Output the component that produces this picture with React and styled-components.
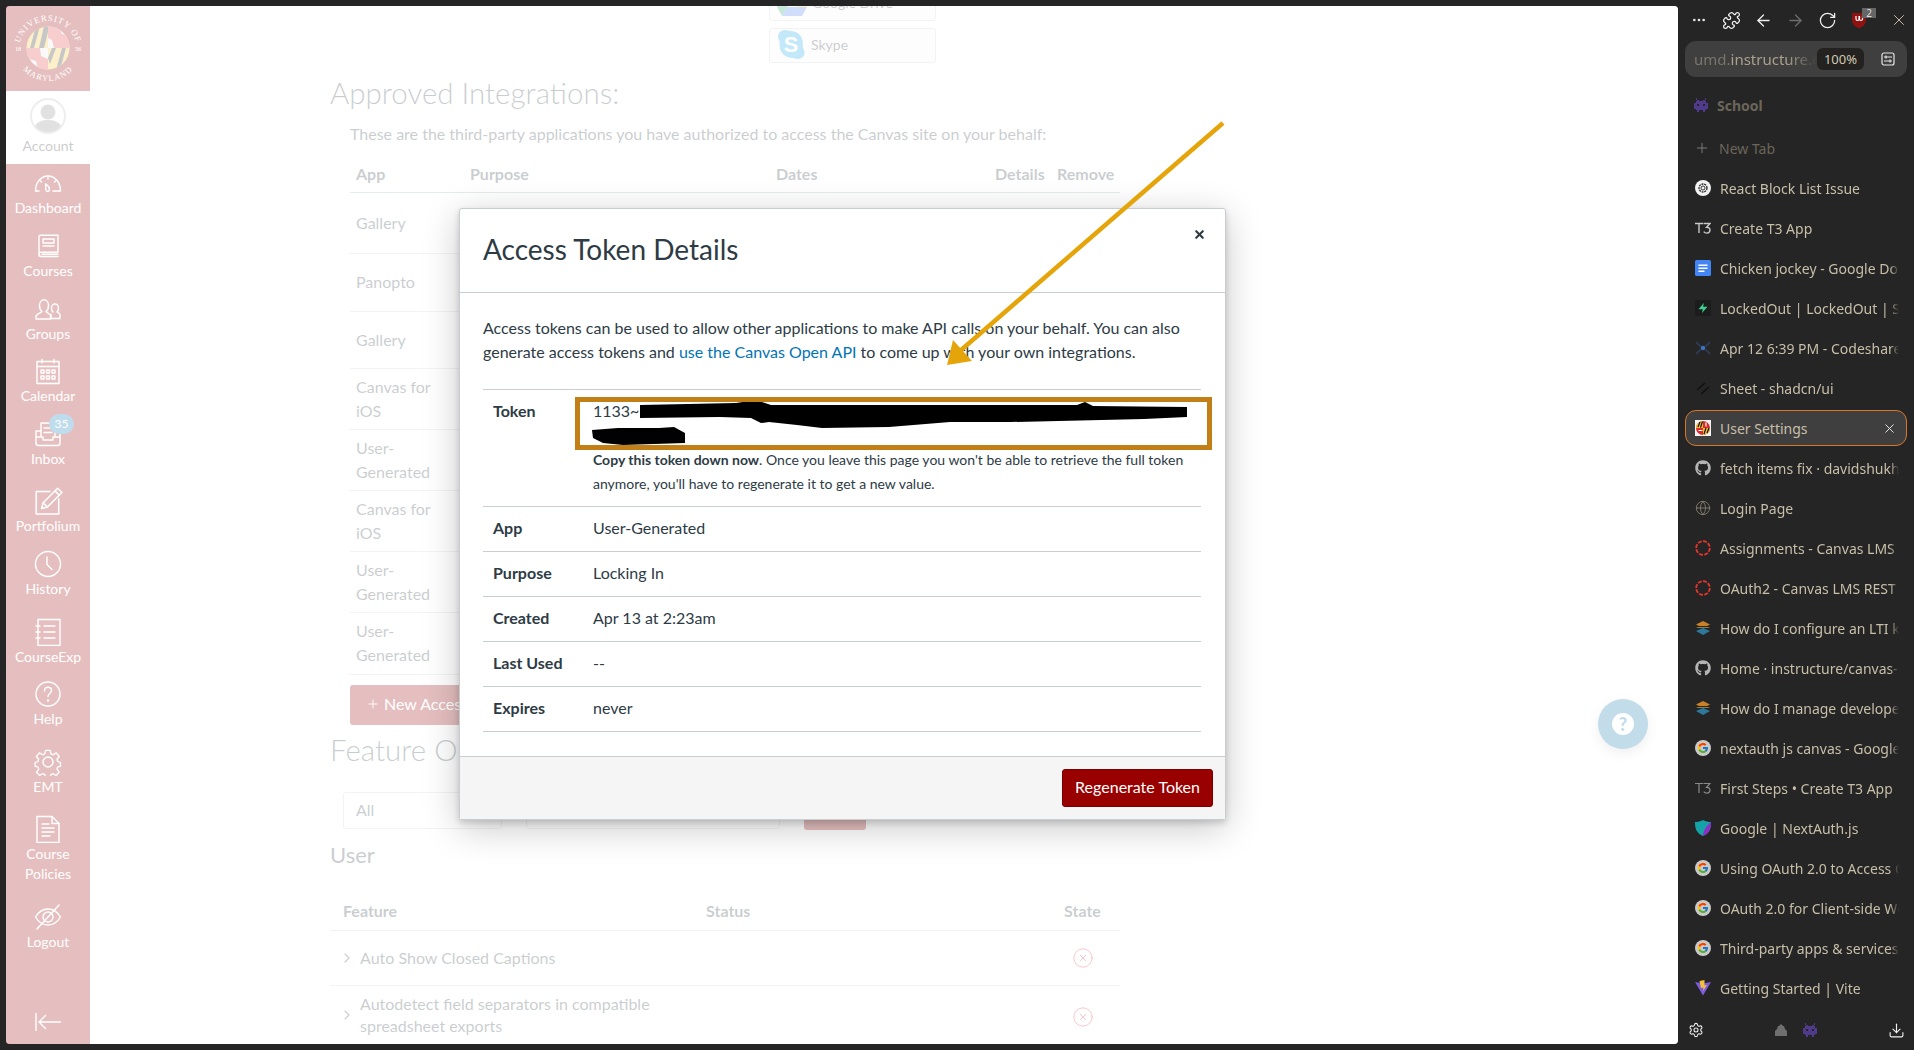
import React from "react";
import styled, { createGlobalStyle } from "styled-components";
import {
  ArrowLeft,
  ArrowRight,
  RotateCw,
  X,
  Plus,
  Globe,
  CircleX,
  ChevronRight,
  Download,
  Ellipsis,
  Puzzle,
  Settings,
} from "lucide-react";
import { FaGithub } from "react-icons/fa";
import { FcGoogle } from "react-icons/fc";

const GlobalStyle = createGlobalStyle`
  html, body { margin: 0; padding: 0; background: #252525; }
  * { box-sizing: border-box; }
  body { font-family: "Lato", "Liberation Sans", sans-serif; color: #2d3b45; overflow: hidden; }
`;

/* ---------- canvas nav icons ---------- */
const NavSvg = ({ children, size = 28 }) => (
  <svg width={size} height={size} viewBox="0 0 28 28" fill="none" stroke="#fff" strokeWidth="1.4" strokeLinecap="round" strokeLinejoin="round">
    {children}
  </svg>
);

const navIcons = {
  dashboard: (
    <NavSvg>
      <path d="M5 22h-3.500c0-8 5-15 12.500-15s12.500 7 12.500 15H19" />
      <path d="M12 15l2.500 2.500 0 0c1 1.500 1.500 3 .5 4.300-1 1-2.500.8-3-.5-.3-1.500-.3-4-.5-6.300z" />
      <path d="M14 8.500v1.500M6.500 12l1 1M21.500 12l-1 1" />
    </NavSvg>
  ),
  courses: (
    <NavSvg>
      <path d="M5 24V4.500c0-.8.5-1.300 1.300-1.300H24v17H7.500C6 20.200 5 21 5 22.300 5 23.500 6 24.500 7.500 24.500H24" />
      <rect x="9" y="7" width="11" height="4" />
      <path d="M9 14h11M8 22.300h16" />
    </NavSvg>
  ),
  groups: (
    <NavSvg>
      <path d="M2 24v-2.500c0-2.500 5-3.500 6-5-2-1.500-2.500-4-2.500-6C5.500 7 7.500 4.800 10 4.800s4.500 2.200 4.500 5.700c0 2-.5 4.500-2.500 6 1 1.500 3 2 4.500 3.500V24z" />
      <path d="M19 17c-1-1-1.500-2.500-1.500-4 0-2.200 1.500-4 3.500-4s3.500 1.800 3.500 4c0 1.500-.5 3-1.500 4 1 .7 3 1.200 3 3v3.500H17v-4" />
    </NavSvg>
  ),
  calendar: (
    <NavSvg>
      <rect x="3" y="4.500" width="22" height="22" />
      <path d="M3 9.500h22M8 2.500v3.500M20 2.500v3.500" />
      <path d="M7 13h3v3H7zM12.500 13h3v3h-3zM18 13h3v3h-3zM7 19h3v3H7zM12.500 19h3v3h-3zM18 19h3v3h-3z" />
    </NavSvg>
  ),
  inbox: (
    <NavSvg>
      <path d="M7 16V3h14v13" />
      <path d="M10 8h8M10 12.500h8" />
      <path d="M7 11H2v12c0 1.500 1 2.500 2.500 2.500h19c1.500 0 2.500-1 2.500-2.500V11h-5" />
      <path d="M2 17h7v3h10v-3h7" />
    </NavSvg>
  ),
  portfolium: (
    <NavSvg size={30}>
      <path d="M16 6H3v21h21V13" />
      <path d="M8 22l1.500-5.500L23 3l4 4-13.500 13.500z" />
      <path d="M20.500 5.500l4 4M9.500 16.500l4 4" />
    </NavSvg>
  ),
  history: (
    <NavSvg>
      <circle cx="14" cy="14" r="12.500" />
      <path d="M13 7v7.500l5 5" />
    </NavSvg>
  ),
  courseexp: (
    <NavSvg>
      <rect x="4" y="1.500" width="22" height="26" />
      <path d="M10 8h11M10 14h11M10 20h11" />
      <path d="M2 8h4M2 14h4M2 20h4" />
    </NavSvg>
  ),
  help: (
    <NavSvg>
      <circle cx="14" cy="14" r="12" />
      <path d="M10.500 11c0-2.500 1.700-3.800 3.500-3.800s3.500 1.300 3.500 3.300c0 3-3.500 3-3.500 6" />
      <circle cx="14" cy="20.500" r=".5" />
    </NavSvg>
  ),
  emt: (
    <NavSvg>
      <path d="M11.500 1.500h5l.7 3.800 2.400 1 3.300-2 3.300 3.800-2.500 3 .7 2.400 3.100 1.100-.0 4-3.200 1-.6 2.400 2.400 3-3.400 3.600-3.200-2.100-2.300 1-.8 3.400h-5l-.7-3.400-2.400-1-3.200 2.100-3.500-3.600 2.500-3-.7-2.400-3.200-1v-4l3.100-1.100.7-2.400-2.500-3 3.400-3.800 3.300 2 2.300-1z" transform="scale(.93) translate(1 1)" />
      <circle cx="14" cy="14" r="5" />
    </NavSvg>
  ),
  policies: (
    <NavSvg>
      <path d="M3 1.500h15l7 7v19H3z" />
      <path d="M18 1.500v7h7" />
      <path d="M8 9h7M8 13h12M8 17h12M8 21h8" />
    </NavSvg>
  ),
  logout: (
    <NavSvg>
      <path d="M1.500 14c3-5 7.500-8 12.500-8s9.500 3 12.500 8c-3 5-7.500 8-12.500 8s-9.500-3-12.500-8z" />
      <circle cx="14" cy="14" r="5" />
      <path d="M3 26L25 2" />
    </NavSvg>
  ),
};

const navItems = [
  { id: "dashboard", label: "Dashboard", h: 58 },
  { id: "courses", label: "Courses", h: 63 },
  { id: "groups", label: "Groups", h: 63 },
  { id: "calendar", label: "Calendar", h: 62 },
  { id: "inbox", label: "Inbox", h: 63, badge: "35" },
  { id: "portfolium", label: "Portfolium", h: 67 },
  { id: "history", label: "History", h: 63 },
  { id: "courseexp", label: "CourseExp", h: 68 },
  { id: "help", label: "Help", h: 62 },
  { id: "emt", label: "EMT", h: 68 },
  { id: "policies", label: "Course Policies", h: 87 },
  { id: "logout", label: "Logout", h: 68 },
];

/* ---------- UMD seal ---------- */
const Seal = () => (
  <svg width="84" height="84" viewBox="0 0 84 84">
    <defs>
      <path id="arcTop" d="M13 44a29 29 0 0 1 58 0" />
      <path id="arcBottom" d="M9 42a33 33 0 0 0 66 0" />
      <clipPath id="globe"><circle cx="42" cy="42" r="21.500" /></clipPath>
    </defs>
    <g clipPath="url(#globe)">
      <rect x="20" y="20" width="22" height="22" fill="#f2c230" />
      <rect x="42" y="42" width="22" height="22" fill="#f2c230" />
      <path d="M24 42l6-22h4l-6 22zM33 42l5-22h4v6l-4 16z" fill="#222" />
      <path d="M42 52l4-10h4l-6 16zM50 64l6-22h4l-6 22z" fill="#222" />
      <rect x="42" y="20" width="22" height="22" fill="#e6e6e6" />
      <rect x="20" y="42" width="22" height="22" fill="#e6e6e6" />
      <path d="M42 20h10l4 8 8 2v12H48l-2-8-4-2z" fill="#e03a3a" />
      <path d="M20 42h14l1 8 7 3v11H32l-2-9-10-3z" fill="#e03a3a" />
    </g>
    <g fill="#fff" fontFamily="'Liberation Serif', serif" fontSize="8.500" letterSpacing="1">
      <text><textPath href="#arcTop" startOffset="50%" textAnchor="middle">UNIVERSITY OF</textPath></text>
      <text><textPath href="#arcBottom" startOffset="50%" textAnchor="middle">MARYLAND</textPath></text>
      <text x="9" y="45" fontSize="6" letterSpacing="0">18</text>
      <text x="69" y="45" fontSize="6" letterSpacing="0">56</text>
    </g>
  </svg>
);

/* ---------- tab favicons ---------- */
const Fav = ({ children }) => <svg width="16" height="16" viewBox="0 0 16 16">{children}</svg>;

const favicons = {
  openai: (
    <Fav>
      <circle cx="8" cy="8" r="8" fill="#f2f2f2" />
      <circle cx="8" cy="8" r="4" fill="none" stroke="#222" strokeWidth="1.300" strokeDasharray="2 .8" />
      <circle cx="8" cy="8" r="2" fill="none" stroke="#222" strokeWidth=".9" />
    </Fav>
  ),
  t3: (
    <Fav>
      <path d="M0 3.500h8M4 3.500V13M8.500 3.500h6.500l-3.500 3.800c2.500 0 3.500 1.200 3.500 2.800 0 2-1.500 3-3.300 3-1.300 0-2.300-.5-3-1.500" fill="none" stroke="#c8c8c8" strokeWidth="1.400" />
    </Fav>
  ),
  t3dim: (
    <Fav>
      <path d="M0 3.500h8M4 3.500V13M8.500 3.500h6.500l-3.500 3.800c2.500 0 3.500 1.200 3.500 2.800 0 2-1.500 3-3.300 3-1.300 0-2.300-.5-3-1.500" fill="none" stroke="#8a8a8a" strokeWidth="1.200" />
    </Fav>
  ),
  docs: (
    <Fav>
      <rect width="16" height="16" rx="1.500" fill="#4285f4" />
      <path d="M3.500 4.500h9v1.500h-9zM3.500 7.500h9V9h-9zM3.500 10.500h6V12h-6z" fill="#fff" />
    </Fav>
  ),
  supabase: (
    <Fav>
      <rect width="16" height="16" rx="1.500" fill="#1c1c1c" />
      <path d="M8.800 3L3.500 9.200h4.300L7 13l5.500-6.200H8.200z" fill="#3ecf8e" />
    </Fav>
  ),
  codeshare: (
    <Fav>
      <path d="M1 2l4.500 4.500M15 2l-4.500 4.500M1 14l4.500-4.500M15 14l-4.500-4.500" stroke="#2d3b50" strokeWidth="2" />
      <circle cx="8" cy="8" r="2.300" fill="#3f70c4" />
    </Fav>
  ),
  shadcn: (
    <Fav>
      <path d="M2 10L10 3M6 14L14 7" stroke="#111" strokeWidth="1.600" />
    </Fav>
  ),
  umd: (
    <Fav>
      <rect width="16" height="16" fill="#f4f4f4" />
      <circle cx="8" cy="8" r="7" fill="#d92b2b" />
      <path d="M1 8a7 7 0 0 1 7-7v7zM8 8h7a7 7 0 0 1-7 7z" fill="#f2c230" />
      <path d="M3 7l2-5M5.500 7.500l2-6M9 14l2-6M12 13l2-5" stroke="#111" strokeWidth="1.200" />
      <path d="M11 2.500v4M3.500 10.500h4" stroke="#fff" strokeWidth="1.200" />
    </Fav>
  ),
  canvas: (
    <Fav>
      <circle cx="8" cy="8" r="6.800" fill="none" stroke="#e6352b" strokeWidth="1.800" strokeDasharray="4 1.300" />
    </Fav>
  ),
  instructure: (
    <Fav>
      <path d="M8 1l7 3.500-3 1.500H4L1 4.500z" fill="#c9822a" />
      <path d="M3 7h10l2 .8H1z" fill="#c9a02a" />
      <path d="M8 15l7-4-7-3-7 3z" fill="#2b7a9c" />
    </Fav>
  ),
  nextauth: (
    <Fav>
      <path d="M0 2c3 0 5-.6 8-2 3 1.400 5 2 8 2 0 6-1 11-8 14C1 13 0 8 0 2z" fill="#16a3a8" />
      <path d="M16 2c0 6-1 11-8 14 0-5 3-10 8-14z" fill="#8b2fc9" />
    </Fav>
  ),
  vite: (
    <Fav>
      <path d="M0 2l8 13.500L16 2l-8 1.500z" fill="#7c5ce0" />
      <path d="M9.500 0L4.500 1 6 8l2.500-.5-.5 3.500 4-6-2.500.5z" fill="#f5c13a" />
    </Fav>
  ),
};

const GoogleFav = styled.span`
  width: 16px;
  height: 16px;
  border-radius: 50%;
  background: #c9c9c9;
  display: flex;
  align-items: center;
  justify-content: center;
`;

const renderFavicon = (kind) => {
  if (kind === "github") return <FaGithub size={16} color="#b4b4b4" />;
  if (kind === "globe") return <Globe size={16} color="#8a8372" strokeWidth={1.3} />;
  if (kind === "google")
    return (
      <GoogleFav>
        <FcGoogle size={12} />
      </GoogleFav>
    );
  return favicons[kind];
};

const tabs = [
  { icon: "openai", title: "React Block List Issue" },
  { icon: "t3", title: "Create T3 App" },
  { icon: "docs", title: "Chicken jockey - Google Docs" },
  { icon: "supabase", title: "LockedOut | LockedOut | Supabase" },
  { icon: "codeshare", title: "Apr 12 6:39 PM - Codeshare" },
  { icon: "shadcn", title: "Sheet - shadcn/ui" },
  { icon: "umd", title: "User Settings", active: true },
  { icon: "github", title: "fetch items fix · davidshukhin/lockedout" },
  { icon: "globe", title: "Login Page" },
  { icon: "canvas", title: "Assignments - Canvas LMS REST API" },
  { icon: "canvas", title: "OAuth2 - Canvas LMS REST API" },
  { icon: "instructure", title: "How do I configure an LTI key for an account" },
  { icon: "github", title: "Home · instructure/canvas-lms Wiki" },
  { icon: "instructure", title: "How do I manage developer keys" },
  { icon: "google", title: "nextauth js canvas - Google Search" },
  { icon: "t3dim", title: "First Steps • Create T3 App" },
  { icon: "nextauth", title: "Google | NextAuth.js" },
  { icon: "google", title: "Using OAuth 2.0 to Access Google APIs" },
  { icon: "google", title: "OAuth 2.0 for Client-side Web Apps" },
  { icon: "google", title: "Third-party apps & services" },
  { icon: "vite", title: "Getting Started | Vite" },
];

const Invader = ({ color, size = 16 }) => (
  <svg width={size} height={size} viewBox="0 0 11 11" fill={color} shapeRendering="crispEdges">
    <path d="M2 1h1v1h1v1h3V2h1V1h1v1H8v1h1v1h1v4H9v1H8v1H7V9H4v1H3V9H2V8H1V4h1V3h1V2H2zM3 5v1h1V5zm4 0v1h1V5z" fillRule="evenodd" />
  </svg>
);

export default function App() {
  return (
    <Stage>
      <GlobalStyle />
      <Main>
        <Nav>
          <LogoBox>
            <Seal />
          </LogoBox>
          <AccountItem>
            <Avatar>
              <svg width="36" height="36" viewBox="0 0 36 36">
                <circle cx="18" cy="18" r="17" fill="#fff" stroke="#bbb" strokeWidth="2" />
                <circle cx="18" cy="14" r="7.500" fill="#888" />
                <path d="M5 28c3-5 8-6 13-6s10 1 13 6c-3 4-8 6-13 6s-10-2-13-6z" fill="#888" />
              </svg>
            </Avatar>
            <AccountLabel>Account</AccountLabel>
          </AccountItem>
          {navItems.map((item) => (
            <NavItem key={item.id} $h={item.h}>
              <NavIconBox>
                {navIcons[item.id]}
                {item.badge && <NavBadge>{item.badge}</NavBadge>}
              </NavIconBox>
              <NavLabel>{item.label}</NavLabel>
            </NavItem>
          ))}
          <Collapse>
            <svg width="28" height="20" viewBox="0 0 28 20" fill="none" stroke="#fff" strokeWidth="1.400">
              <path d="M2 1v18M27 10H5M12 3l-7 7 7 7" />
            </svg>
          </Collapse>
        </Nav>

        <Page>
          <ServiceCards>
            <ServiceCard>
              <svg width="30" height="28" viewBox="0 0 30 28">
                <path d="M10 1h10l10 17h-10z" fill="#f7c52b" />
                <path d="M10 1L0 18l5 9 10-17z" fill="#1da261" />
                <path d="M5 27h20l5-9H10z" fill="#4a7ef0" />
              </svg>
              <ServiceName>Google Drive</ServiceName>
            </ServiceCard>
            <ServiceCard>
              <svg width="29" height="29" viewBox="2 1 26 28">
                <path d="M9 1c2 0 3 1 5 1 7 0 12 5 12 12 0 2-.5 3 .5 5 .5 1.500 1 2.500 1 4 0 4-3 6-6 6-2 0-3-1-5-1-7 0-13-5-13-12 0-2 .5-3-.5-5C2.500 9.500 2 8.500 2 7c0-3.500 3.500-6 7-6z" fill="#12a5e8" />
                <text x="14.500" y="22" fill="#fff" fontFamily="'Liberation Sans', sans-serif" fontWeight="700" fontSize="21" textAnchor="middle">S</text>
              </svg>
              <ServiceName>Skype</ServiceName>
            </ServiceCard>
          </ServiceCards>

          <SectionTitle>Approved Integrations:</SectionTitle>
          <SectionIntro>These are the third-party applications you have authorized to access the Canvas site on your behalf:</SectionIntro>

          <IntegrationTable>
            <IntegrationRow $h={36} $head>
              <span>App</span>
              <span>Purpose</span>
              <span>Dates</span>
              <span>Details</span>
              <span>Remove</span>
            </IntegrationRow>
            {[
              ["Gallery", 61, "Gallery", "Created"],
              ["Panopto", 58],
              ["Gallery", 57],
              ["Canvas for iOS", 61],
              ["User-Generated", 61],
              ["Canvas for iOS", 61],
              ["User-Generated", 61],
              ["User-Generated", 62],
            ].map(([app, h, purpose, dates], i) => (
              <IntegrationRow key={i} $h={h}>
                <span>{app}</span>
                <span>{purpose}</span>
                <span>{dates}</span>
              </IntegrationRow>
            ))}
          </IntegrationTable>

          <NewTokenButton>
            <Plus size={14} strokeWidth={1.5} />
            New Access Token
          </NewTokenButton>

          <SectionTitle $mt={7}>Feature Options</SectionTitle>

          <FilterRow>
            <FilterSelect>All</FilterSelect>
            <FilterInput />
            <FilterButton />
          </FilterRow>

          <SubTitle>User</SubTitle>

          <FeatureTable>
            <FeatureRow $h={36} $head>
              <span>Feature</span>
              <span>Status</span>
              <span>State</span>
            </FeatureRow>
            <FeatureRow $h={55}>
              <FeatureName>
                <ChevronRight size={16} strokeWidth={1.6} />
                <span>Auto Show Closed Captions</span>
              </FeatureName>
              <span />
              <StateIcon>
                <CircleX size={22} strokeWidth={1} color="#e0061f" />
              </StateIcon>
            </FeatureRow>
            <FeatureRow $h={62}>
              <FeatureName $wrap>
                <ChevronRight size={16} strokeWidth={1.6} />
                <span>Autodetect field separators in compatible spreadsheet exports</span>
              </FeatureName>
              <span />
              <StateIcon>
                <CircleX size={22} strokeWidth={1} color="#e0061f" />
              </StateIcon>
            </FeatureRow>
          </FeatureTable>
        </Page>

        <HelpFab>
          <HelpDot>?</HelpDot>
        </HelpFab>

        <Overlay />

        <Modal>
          <ModalHeader>
            <ModalTitle>Access Token Details</ModalTitle>
            <CloseButton>
              <X size={13} strokeWidth={4} />
            </CloseButton>
          </ModalHeader>
          <ModalBody>
            <ModalIntro>
              Access tokens can be used to allow other applications to make API calls on your behalf. You can also generate access tokens and{" "}
              <ModalLink>use the Canvas Open API</ModalLink> to come up with your own integrations.
            </ModalIntro>
            <DetailTable>
              <DetailRow $h={117} $top>
                <DetailKey $top>Token</DetailKey>
                <div>
                  <TokenValue>1133~</TokenValue>
                  <TokenNote>
                    <strong>Copy this token down now</strong>. Once you leave this page you won't be able to retrieve the full token anymore, you'll have to regenerate it to get a new value.
                  </TokenNote>
                </div>
              </DetailRow>
              <DetailRow $h={45}>
                <DetailKey>App</DetailKey>
                <DetailValue>User-Generated</DetailValue>
              </DetailRow>
              <DetailRow $h={45}>
                <DetailKey>Purpose</DetailKey>
                <DetailValue>Locking In</DetailValue>
              </DetailRow>
              <DetailRow $h={45}>
                <DetailKey>Created</DetailKey>
                <DetailValue>Apr 13 at 2:23am</DetailValue>
              </DetailRow>
              <DetailRow $h={45}>
                <DetailKey>Last Used</DetailKey>
                <DetailValue>--</DetailValue>
              </DetailRow>
              <DetailRow $h={45}>
                <DetailKey>Expires</DetailKey>
                <DetailValue>never</DetailValue>
              </DetailRow>
            </DetailTable>
          </ModalBody>
          <ModalFooter>
            <RegenerateButton>Regenerate Token</RegenerateButton>
          </ModalFooter>
        </Modal>
      </Main>

      <Side>
        <SideTools>
          <ToolButton><Ellipsis size={16} color="#e6e6e6" /></ToolButton>
          <ToolButton><Puzzle size={19} color="#efefef" strokeWidth={1.6} /></ToolButton>
          <ToolButton><ArrowLeft size={19} color="#efefef" strokeWidth={1.6} /></ToolButton>
          <ToolButton><ArrowRight size={19} color="#6e6e6e" strokeWidth={1.6} /></ToolButton>
          <ToolButton><RotateCw size={19} color="#efefef" strokeWidth={1.6} /></ToolButton>
          <ToolButton>
            <svg width="16" height="18" viewBox="0 0 16 18">
              <path d="M1 2h14v7c0 4-3 7-7 8.500C4 16 1 13 1 9z" fill="#8e1212" />
              <path d="M4.500 5v3a1.500 1.500 0 0 0 3 0V5M8 5v3a1.500 1.500 0 0 0 3 0V5" transform="translate(.5 0)" fill="none" stroke="#fff" strokeWidth="1.200" />
            </svg>
            <ToolBadge>2</ToolBadge>
          </ToolButton>
          <CloseTool><X size={18} color="#e6dcc2" strokeWidth={1.1} /></CloseTool>
        </SideTools>

        <UrlBar>
          <UrlText>
            <UrlDim>umd.</UrlDim>instructure.com/profile/settings
          </UrlText>
          <ZoomPill>100%</ZoomPill>
          <UrlIcon>
            <svg width="14" height="14" viewBox="0 0 14 14" fill="none" stroke="#e6e6e6" strokeWidth="1.200">
              <rect x="1" y="1" width="12" height="12" rx="2" />
              <path d="M3 5h8M3 9h8M5 3.500v3M9 7.500v3" />
            </svg>
          </UrlIcon>
        </UrlBar>

        <SpaceTitle>
          <Invader color="#4f3a8c" />
          School
        </SpaceTitle>

        <NewTab>
          <Plus size={16} color="#7a7a7a" strokeWidth={1.5} />
          New Tab
        </NewTab>

        <TabList>
          {tabs.map((tab, i) => (
            <Tab key={i} $active={tab.active}>
              <TabIcon>{renderFavicon(tab.icon)}</TabIcon>
              <TabTitle $active={tab.active}>{tab.title}</TabTitle>
              {tab.active && <X size={15} color="#eee" strokeWidth={1.5} />}
            </Tab>
          ))}
        </TabList>

        <SideBottom>
          <Settings size={16} color="#f0f0f0" strokeWidth={1.6} />
          <Workspaces>
            <svg width="14" height="14" viewBox="0 0 14 14" fill="#6f6f6f">
              <path d="M7 1l2 2h1l1 3 2 2v5H1V8l2-2 1-3h1z" />
            </svg>
            <Invader color="#4f3a8c" />
          </Workspaces>
          <Download size={17} color="#f0f0f0" strokeWidth={1.6} />
        </SideBottom>
      </Side>

      <Annotations viewBox="0 0 1914 1050">
        <path
          d="M640 405 L736 403 L756 400 L771 405 L1011 405 L1077 405 L1085 402 L1093 406 L1187 407 L1187 417 L1144 419 L1011 422 L950 422 L889 427 L822 428 L797 425 L769 422 L761 423 L751 418 L720 417 L640 418 Z"
          fill="#000"
        />
        <path d="M592 430 L618 428 L659 428 L674 427 L685 433 L685 443 L623 445 L603 443 L593 438 Z" fill="#000" />
        <rect x="577.500" y="399.500" width="632" height="48" fill="none" stroke="#c17f16" strokeWidth="5" />
        <path d="M1223 123 L960 351" stroke="#e5a50a" strokeWidth="4.500" fill="none" />
        <path d="M947 365 L953 340 L972 361 Z" fill="#e5a50a" />
      </Annotations>
    </Stage>
  );
}

/* ---------- frame ---------- */
const Stage = styled.div`
  position: relative;
  width: 1914px;
  height: 1050px;
  background: #252525;
  display: flex;
  padding: 6px 0 6px 6px;
  overflow: hidden;
`;
const Main = styled.div`
  position: relative;
  flex: none;
  width: 1672px;
  height: 1038px;
  background: #fff;
  border-radius: 4px;
  overflow: hidden;
  display: flex;
`;
const Annotations = styled.svg`
  position: absolute;
  inset: 0;
  width: 1914px;
  height: 1050px;
  pointer-events: none;
`;

/* ---------- canvas left nav ---------- */
const Nav = styled.nav`
  flex: 0 0 84px;
  height: 100%;
  background: #990000;
  display: flex;
  flex-direction: column;
  align-items: stretch;
`;
const LogoBox = styled.div`
  height: 84.500px;
  display: flex;
  align-items: center;
  justify-content: center;
`;
const AccountItem = styled.div`
  height: 73.500px;
  background: #fff;
  display: flex;
  flex-direction: column;
  align-items: center;
  padding-top: 7px;
`;
const Avatar = styled.div`
  height: 36px;
  margin-bottom: 2px;
`;
const AccountLabel = styled.span`
  font-size: 14px;
  line-height: 20px;
  color: #333;
`;
const NavItem = styled.div`
  height: ${(p) => p.$h}px;
  display: flex;
  flex-direction: column;
  align-items: center;
  justify-content: flex-end;
  padding-bottom: 4px;
`;
const NavIconBox = styled.div`
  position: relative;
  display: flex;
  margin-bottom: 1px;
`;
const NavBadge = styled.span`
  position: absolute;
  top: -6px;
  right: -12px;
  min-width: 25px;
  height: 20px;
  border-radius: 10px;
  background: #0374b5;
  color: #fff;
  font-size: 12px;
  line-height: 20px;
  text-align: center;
`;
const NavLabel = styled.span`
  font-size: 14px;
  line-height: 20px;
  color: #fff;
  text-align: center;
  width: 70px;
`;
const Collapse = styled.div`
  margin-top: auto;
  height: 48px;
  display: flex;
  align-items: center;
  justify-content: center;
  padding-top: 3px;
`;

/* ---------- page behind the dialog ---------- */
const Page = styled.main`
  width: 790px;
  margin: -20px 0 0 240px;
  font-size: 16px;
`;
const ServiceCards = styled.div`
  margin-left: 439px;
  width: 167px;
  display: flex;
  flex-direction: column;
  gap: 7px;
`;
const ServiceCard = styled.div`
  height: 35px;
  border: 1px solid #c7cdd1;
  border-radius: 3px;
  background: #f5f5f5;
  display: flex;
  align-items: center;
  gap: 5px;
  padding-left: 7px;
  padding-bottom: 2px;
`;
const ServiceName = styled.span`
  font-size: 14px;
`;
const SectionTitle = styled.h2`
  margin: ${(p) => p.$mt ?? 12}px 0 0;
  font-size: 29.500px;
  line-height: 36px;
  font-weight: 300;
  white-space: nowrap;
`;
const SubTitle = styled.h3`
  margin: 12px 0 0;
  font-size: 22px;
  line-height: 26px;
  font-weight: 400;
`;
const SectionIntro = styled.p`
  margin: 11px 0 0 20px;
  line-height: 24px;
  white-space: nowrap;
`;
const IntegrationTable = styled.div`
  margin: 11px 0 0 20px;
`;
const IntegrationRow = styled.div`
  display: grid;
  grid-template-columns: 114px 306px 219px 62px 69px;
  height: ${(p) => p.$h}px;
  align-items: center;
  border-bottom: 1px solid ${(p) => (p.$head ? "#a5afb5" : "#c7cdd1")};
  font-weight: ${(p) => (p.$head ? 700 : 400)};
  line-height: 24px;
  padding-bottom: ${(p) => (p.$head ? "2px" : "1px")};
  & > span {
    padding-left: 6px;
  }
  & > span:first-child {
    padding-right: 24px;
  }
`;
const NewTokenButton = styled.div`
  margin: 10px 0 0 20px;
  width: 190px;
  height: 40px;
  background: #990000;
  border-radius: 3px;
  color: #fff;
  display: flex;
  align-items: center;
  gap: 4px;
  padding: 0 0 3px 16px;
`;
const FilterRow = styled.div`
  margin: 24px 0 0 13px;
  display: flex;
  gap: 24px;
`;
const FilterSelect = styled.div`
  width: 159px;
  height: 37px;
  border: 1px solid #c7cdd1;
  border-radius: 3px;
  padding: 0 12px;
  line-height: 33px;
`;
const FilterInput = styled.div`
  width: 254px;
  height: 37px;
  border: 1px solid #c7cdd1;
  border-radius: 3px;
`;
const FilterButton = styled.div`
  width: 62px;
  height: 38px;
  background: #990000;
  border-radius: 3px;
`;
const FeatureTable = styled.div`
  margin-top: 27px;
`;
const FeatureRow = styled.div`
  display: grid;
  grid-template-columns: 376px 358px 56px;
  height: ${(p) => p.$h}px;
  align-items: center;
  border-bottom: 1px solid #c7cdd1;
  font-weight: ${(p) => (p.$head ? 700 : 400)};
  padding-bottom: ${(p) => (p.$head ? "5px" : 0)};
  & > span:first-child {
    padding-left: 13px;
  }
`;
const FeatureName = styled.div`
  display: flex;
  align-items: center;
  gap: 5px;
  padding-left: 9px;
  padding-right: 20px;
  padding-bottom: ${(p) => (p.$wrap ? "3px" : "1px")};
  line-height: 22px;
  & > svg {
    flex: none;
  }
`;
const StateIcon = styled.div`
  display: flex;
  padding-left: 8px;
`;
const HelpFab = styled.div`
  position: absolute;
  left: 1592px;
  top: 693px;
  width: 50px;
  height: 50px;
  border-radius: 50%;
  background: #0c74ac;
  box-shadow: 0 4px 12px rgba(0, 0, 0, 0.25);
  display: flex;
  align-items: center;
  justify-content: center;
`;
const HelpDot = styled.span`
  width: 22px;
  height: 22px;
  border-radius: 50%;
  background: #fff;
  color: #0c74ac;
  font-size: 18px;
  font-weight: 900;
  line-height: 22px;
  text-align: center;
`;
const Overlay = styled.div`
  position: absolute;
  inset: 0;
  background: rgba(255, 255, 255, 0.75);
`;

/* ---------- dialog ---------- */
const Modal = styled.div`
  position: absolute;
  left: 453px;
  top: 202px;
  width: 767px;
  height: 612px;
  background: #fff;
  border: 1px solid #c7cdd1;
  border-radius: 3px;
  box-shadow: 0 3px 6px rgba(0, 0, 0, 0.16), 0 8px 36px rgba(0, 0, 0, 0.22);
  display: flex;
  flex-direction: column;
  font-size: 16px;
`;
const ModalHeader = styled.header`
  position: relative;
  height: 84px;
  flex: none;
  border-bottom: 1px solid #c7cdd1;
  padding: 0 23px 4px;
  display: flex;
  align-items: center;
`;
const ModalTitle = styled.h1`
  margin: 0;
  font-size: 28px;
  font-weight: 400;
  line-height: 34px;
`;
const CloseButton = styled.span`
  position: absolute;
  right: 19px;
  top: 19px;
  display: flex;
`;
const ModalBody = styled.div`
  flex: 1;
  padding: 23px 24px 0 23px;
`;
const ModalIntro = styled.p`
  margin: 0;
  line-height: 24px;
`;
const ModalLink = styled.a`
  color: #0374b5;
`;
const DetailTable = styled.div`
  margin-top: 25px;
  border-top: 1px solid #c7cdd1;
`;
const DetailRow = styled.div`
  display: grid;
  grid-template-columns: 110px 1fr;
  height: ${(p) => p.$h}px;
  align-items: ${(p) => (p.$top ? "start" : "center")};
  padding-top: ${(p) => (p.$top ? "9px" : 0)};
  padding-bottom: ${(p) => (p.$top ? 0 : "3px")};
  border-bottom: 1px solid #c7cdd1;
`;
const DetailKey = styled.span`
  font-weight: 700;
  padding-left: 10px;
  line-height: 24px;
`;
const DetailValue = styled.span`
  line-height: 24px;
`;
const TokenValue = styled.div`
  height: 49px;
  line-height: 24px;
`;
const TokenNote = styled.p`
  margin: 0;
  font-size: 14px;
  line-height: 24px;
`;
const ModalFooter = styled.footer`
  flex: none;
  height: 63px;
  background: #f5f5f5;
  border-top: 1px solid #c7cdd1;
  display: flex;
  align-items: center;
  justify-content: flex-end;
  padding-right: 12px;
`;
const RegenerateButton = styled.div`
  height: 38px;
  padding: 0 12px;
  background: #990000;
  border: 1px solid #7a0000;
  border-radius: 3px;
  color: #fff;
  line-height: 34px;
`;

/* ---------- browser side panel ---------- */
const Side = styled.aside`
  flex: none;
  width: 236px;
  min-width: 0;
  height: 1038px;
  display: flex;
  flex-direction: column;
  padding: 0 7px;
  font-family: "Noto Sans", "Open Sans", sans-serif;
  color: #c8bfa9;
`;
const SideTools = styled.div`
  height: 28px;
  margin-left: -2px;
  display: flex;
  align-items: center;
`;
const ToolButton = styled.div`
  position: relative;
  flex: none;
  width: 32px;
  height: 28px;
  display: flex;
  align-items: center;
  justify-content: center;
`;
const ToolBadge = styled.span`
  position: absolute;
  top: 2px;
  right: -1px;
  width: 14px;
  height: 10px;
  background: #666;
  color: #ddd;
  font-size: 10px;
  line-height: 10px;
  text-align: center;
`;
const CloseTool = styled(ToolButton)`
  margin-left: 8px;
`;
const UrlBar = styled.div`
  margin-top: 7px;
  height: 36px;
  border-radius: 11px;
  background: #3f3f3f;
  display: flex;
  align-items: center;
  padding: 0 9px;
  font-size: 15px;
`;
const UrlText = styled.div`
  width: 123px;
  white-space: nowrap;
  overflow: hidden;
  color: #aaa18d;
  -webkit-mask-image: linear-gradient(to right, #000 75%, transparent 100%);
  mask-image: linear-gradient(to right, #000 75%, transparent 100%);
`;
const UrlDim = styled.span`
  color: #7a7568;
`;
const ZoomPill = styled.div`
  width: 47px;
  height: 22px;
  border-radius: 6px;
  background: #232220;
  color: #d2c9b4;
  font-size: 13px;
  line-height: 22px;
  text-align: center;
`;
const UrlIcon = styled.div`
  margin-left: 17px;
  display: flex;
`;
const SpaceTitle = styled.div`
  margin-top: 17px;
  height: 22px;
  padding-left: 8px;
  display: flex;
  align-items: center;
  gap: 8px;
  font-size: 14px;
  font-weight: 700;
  color: #6b655a;
`;
const NewTab = styled.div`
  margin-top: 14px;
  height: 36px;
  padding-left: 9px;
  display: flex;
  align-items: center;
  gap: 9px;
  font-size: 14px;
  color: #6b655a;
`;
const TabList = styled.div`
  margin-top: 4px;
  display: flex;
  flex-direction: column;
  gap: 4px;
`;
const Tab = styled.div`
  height: 36px;
  min-width: 0;
  padding: 0 ${(p) => (p.$active ? "9px" : "7px")} 0 9px;
  display: flex;
  align-items: center;
  gap: 9px;
  border-radius: 11px;
  border: 1px solid ${(p) => (p.$active ? "#d9782a" : "transparent")};
  background: ${(p) => (p.$active ? "#3f3f3f" : "transparent")};
  font-size: 14px;
`;
const TabIcon = styled.span`
  flex: none;
  width: 16px;
  height: 16px;
  display: flex;
`;
const TabTitle = styled.span`
  flex: 1;
  min-width: 0;
  white-space: nowrap;
  overflow: hidden;
  ${(p) =>
    !p.$active &&
    `-webkit-mask-image: linear-gradient(to right, #000 95%, transparent 100%);
     mask-image: linear-gradient(to right, #000 95%, transparent 100%);`}
`;
const SideBottom = styled.div`
  margin-top: auto;
  height: 28px;
  padding: 0 2px 0 3px;
  display: flex;
  align-items: center;
  justify-content: space-between;
`;
const Workspaces = styled.div`
  display: flex;
  align-items: center;
  gap: 14px;
`;
